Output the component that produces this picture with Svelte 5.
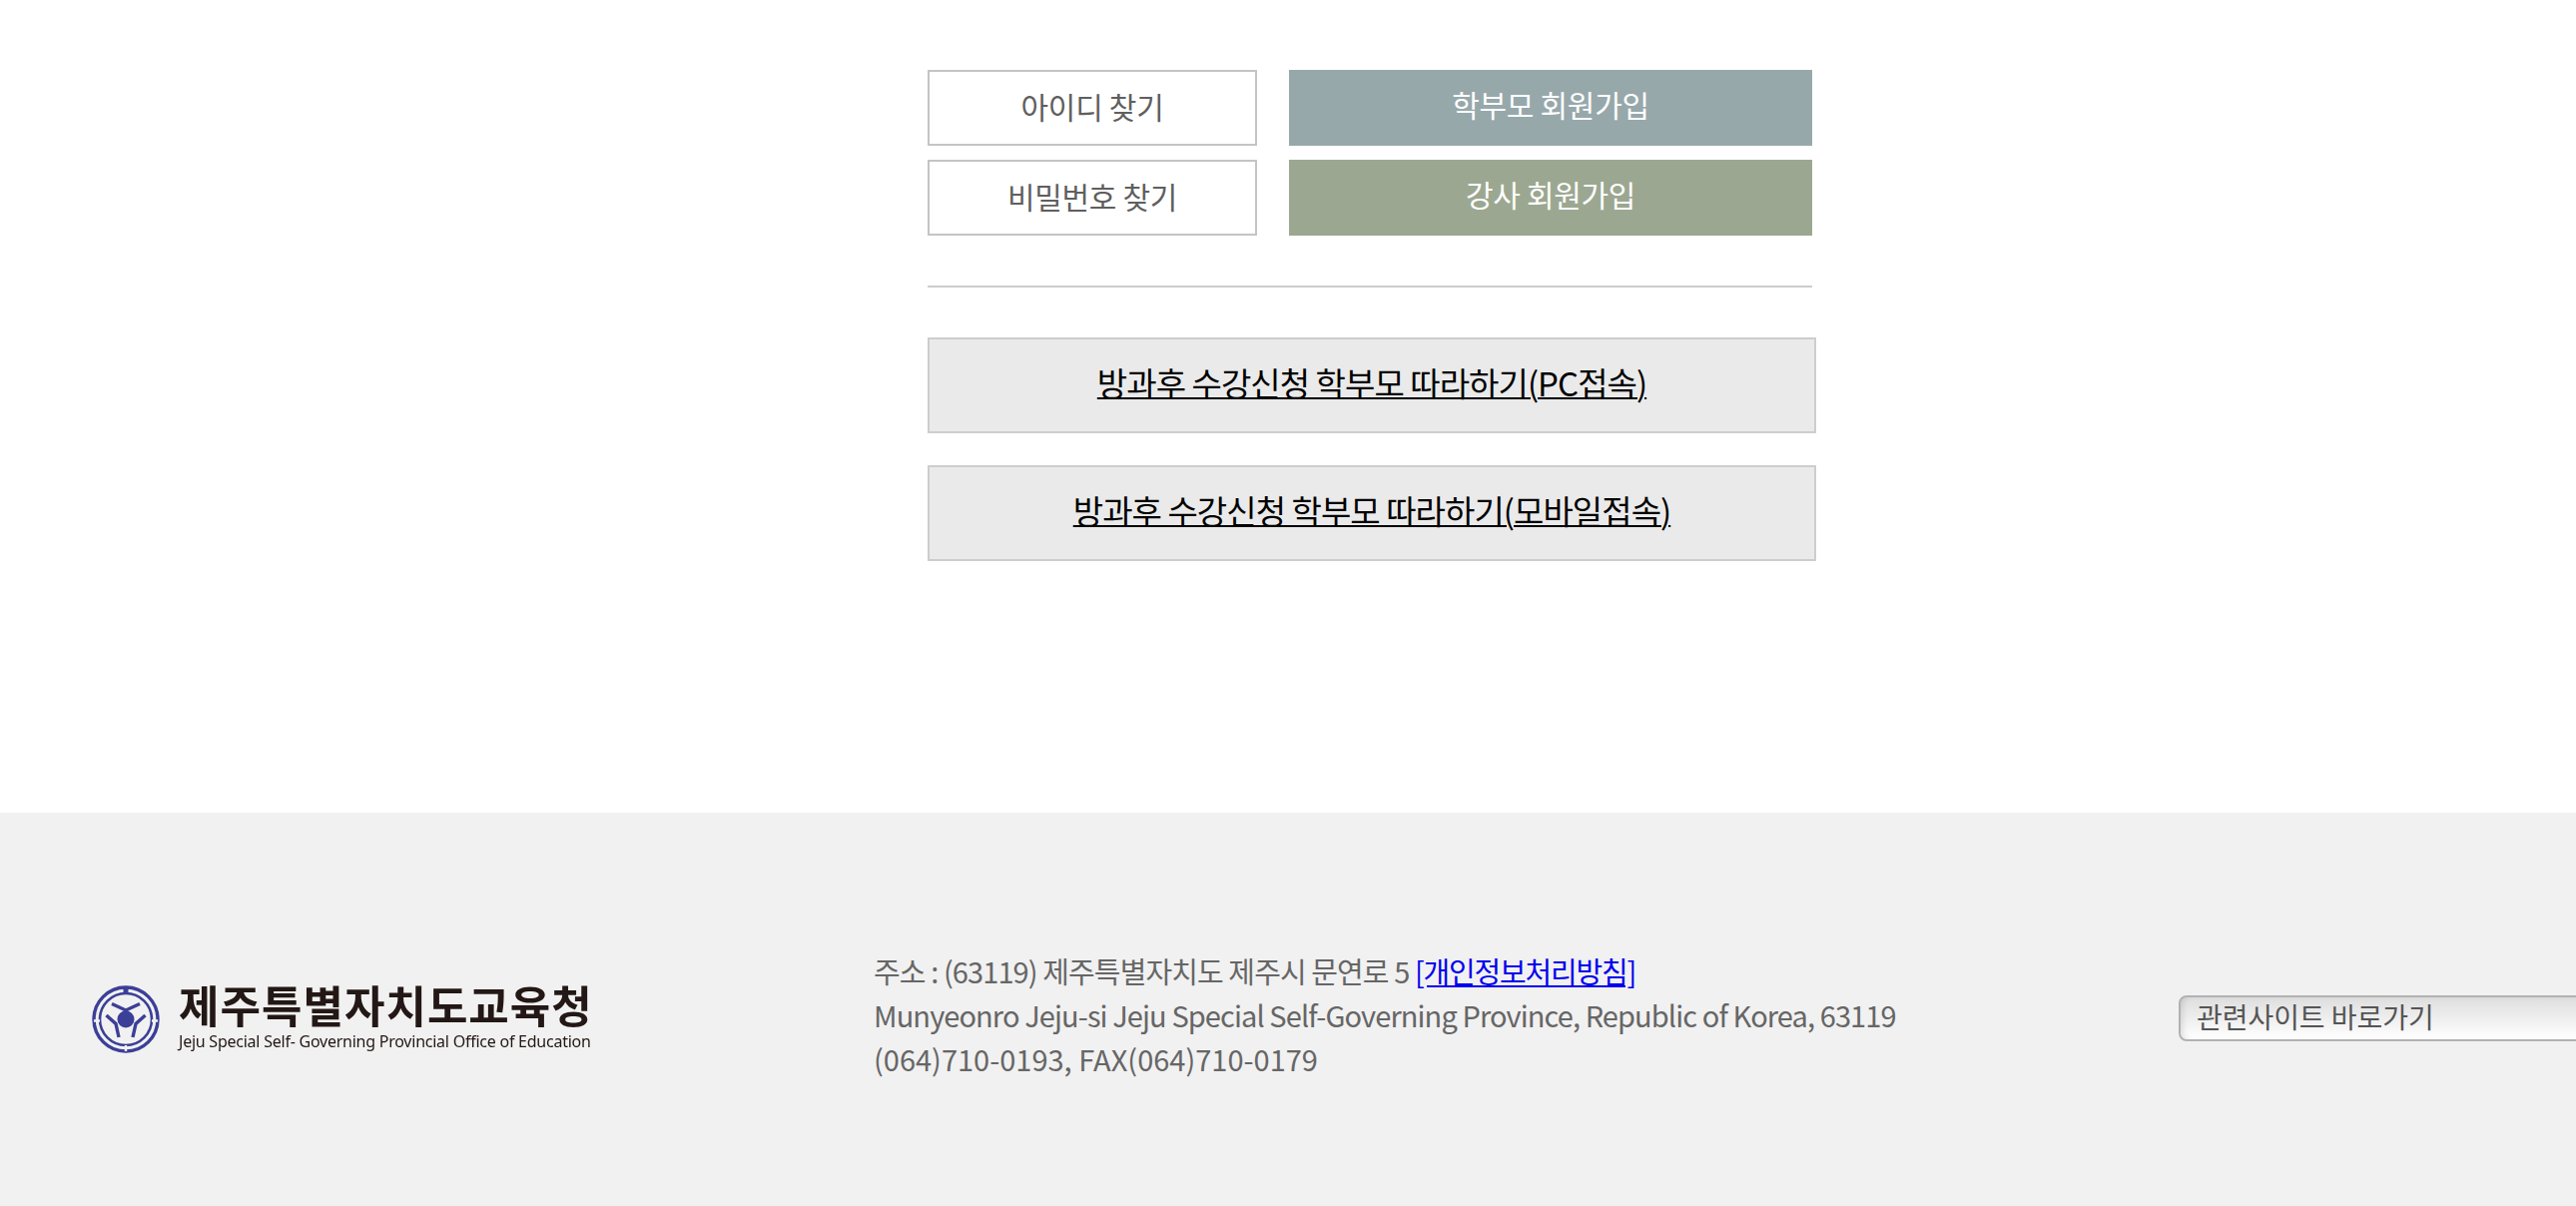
<script>
  const findLinks = ['아이디 찾기', '비밀번호 찾기'];
  const joinLinks = [
    { label: '학부모 회원가입', tone: 'parent' },
    { label: '강사 회원가입', tone: 'teacher' }
  ];
  const guides = ['방과후 수강신청 학부모 따라하기(PC접속)', '방과후 수강신청 학부모 따라하기(모바일접속)'];
</script>

<div class="page">
  <main class="content">
    <div class="account">
      <div class="col find">
        {#each findLinks as label}
          <div class="find-btn">{label}</div>
        {/each}
      </div>
      <div class="col join">
        {#each joinLinks as item}
          <div class="join-btn {item.tone}">{item.label}</div>
        {/each}
      </div>
    </div>
    <hr class="rule" />
    <div class="guides">
      {#each guides as g}
        <div class="guide"><a href="#top">{g}</a></div>
      {/each}
    </div>
  </main>

  <footer class="footer">
    <div class="logo">
      <svg class="emblem" viewBox="0 0 68 68" width="68" height="68" aria-hidden="true">
        <g fill="none" stroke="#3b3f97">
          <circle cx="34" cy="34" r="32" stroke-width="3.4" />
          <circle cx="34" cy="34" r="26" stroke-width="2.6" />
          <path d="M34 8V2" stroke-width="5" />
          <path d="M2 35.5h6M60 35.5h6M34 60v6" stroke="#f1f1f1" stroke-width="2.4" />
          <path d="M20 18.5 34 25 48 18.5M34 25v3" stroke-width="3.4" />
          <path d="M14.500 30 24 38.500 27 52" stroke-width="3.4" />
          <path d="M53.500 30 44 38.500 41 52" stroke-width="3.4" />
        </g>
        <circle cx="34" cy="34" r="8.500" fill="#3b3f97" />
      </svg>
      <div class="logo-text">
        <div class="logo-kr">제주특별자치도교육청</div>
        <div class="logo-en">Jeju Special Self- Governing Provincial Office of Education</div>
      </div>
    </div>

    <address class="address">
      <div>주소 : (63119) 제주특별자치도 제주시 문연로 5 <a href="#top">[개인정보처리방침]</a></div>
      <div>Munyeonro Jeju-si Jeju Special Self-Governing Province, Republic of Korea, 63119</div>
      <div class="phone">(064)710-0193, FAX(064)710-0179</div>
    </address>

    <div class="related">관련사이트 바로가기</div>
  </footer>
</div>

<style>
  :global(body) {
    margin: 0;
    background: #fff;
  }
  .page {
    height: 1208px;
    display: flex;
    flex-direction: column;
    overflow: hidden;
    font-family: "Noto Sans CJK KR", "Noto Sans", sans-serif;
  }
  .content {
    flex: 1;
    box-sizing: border-box;
    padding: 70px 0 0 929px;
  }
  .account {
    display: flex;
    gap: 32px;
    width: 886px;
  }
  .col {
    display: flex;
    flex-direction: column;
    gap: 14px;
  }
  .find {
    width: 330px;
  }
  .join {
    flex: 1;
  }
  .find-btn,
  .join-btn {
    height: 76px;
    box-sizing: border-box;
    display: flex;
    align-items: center;
    justify-content: center;
    font-size: 30px;
    letter-spacing: -0.3px;
  }
  .find-btn {
    border: 2px solid #c4c4c4;
    color: #5f5f5f;
    background: #fff;
    padding-bottom: 5px;
  }
  .join-btn {
    color: #fff;
    padding-bottom: 9px;
  }
  .parent {
    background: #97a8ab;
  }
  .teacher {
    background: #9ca791;
  }
  .rule {
    width: 886px;
    height: 2px;
    margin: 50px 0;
    border: 0;
    background: #cccccc;
  }
  .guides {
    display: flex;
    flex-direction: column;
    gap: 32px;
  }
  .guide {
    width: 890px;
    height: 96px;
    box-sizing: border-box;
    border: 2px solid #cdcdcd;
    background: #eaeaea;
    display: flex;
    align-items: center;
    justify-content: center;
    padding-bottom: 6px;
    font-size: 33px;
    letter-spacing: -0.95px;
  }
  .guide a {
    color: #000;
    text-decoration-thickness: 2px;
  }
  .footer {
    height: 394px;
    flex: none;
    background: #f1f1f1;
    display: flex;
    align-items: flex-start;
  }
  .logo {
    display: flex;
    flex: none;
    align-items: flex-start;
    gap: 19px;
    width: 875px;
    box-sizing: border-box;
    padding: 173px 0 0 92px;
    filter: blur(0.4px);
  }
  .emblem {
    flex: none;
  }
  .logo-text {
    margin-top: -4px;
    color: #231815;
  }
  .logo-kr {
    font-size: 44px;
    font-weight: 700;
    line-height: 46px;
    white-space: nowrap;
    letter-spacing: 1px;
  }
  .logo-en {
    font-size: 16px;
    line-height: 20px;
    margin-top: 4px;
    white-space: nowrap;
    font-family: "Noto Sans", sans-serif;
    letter-spacing: -0.24px;
  }
  .address {
    width: 1307px;
    flex: none;
    padding-top: 136px;
    font-style: normal;
    font-size: 29px;
    line-height: 44px;
    color: #666;
    white-space: nowrap;
    letter-spacing: -0.9px;
  }
  .address a {
    color: #0000ee;
    letter-spacing: -1.2px;
  }
  .phone {
    letter-spacing: 0;
  }
  .related {
    flex: none;
    width: 600px;
    height: 46px;
    margin-top: 183px;
    box-sizing: border-box;
    padding-left: 16px;
    border: 2px solid #b2b2b2;
    border-radius: 8px;
    background: linear-gradient(#dedede, #fff);
    box-shadow: inset 5px 0 6px -3px rgba(0, 0, 0, 0.12);
    font-size: 28px;
    line-height: 38px;
    color: #555;
    letter-spacing: -0.05px;
    white-space: nowrap;
  }
</style>
